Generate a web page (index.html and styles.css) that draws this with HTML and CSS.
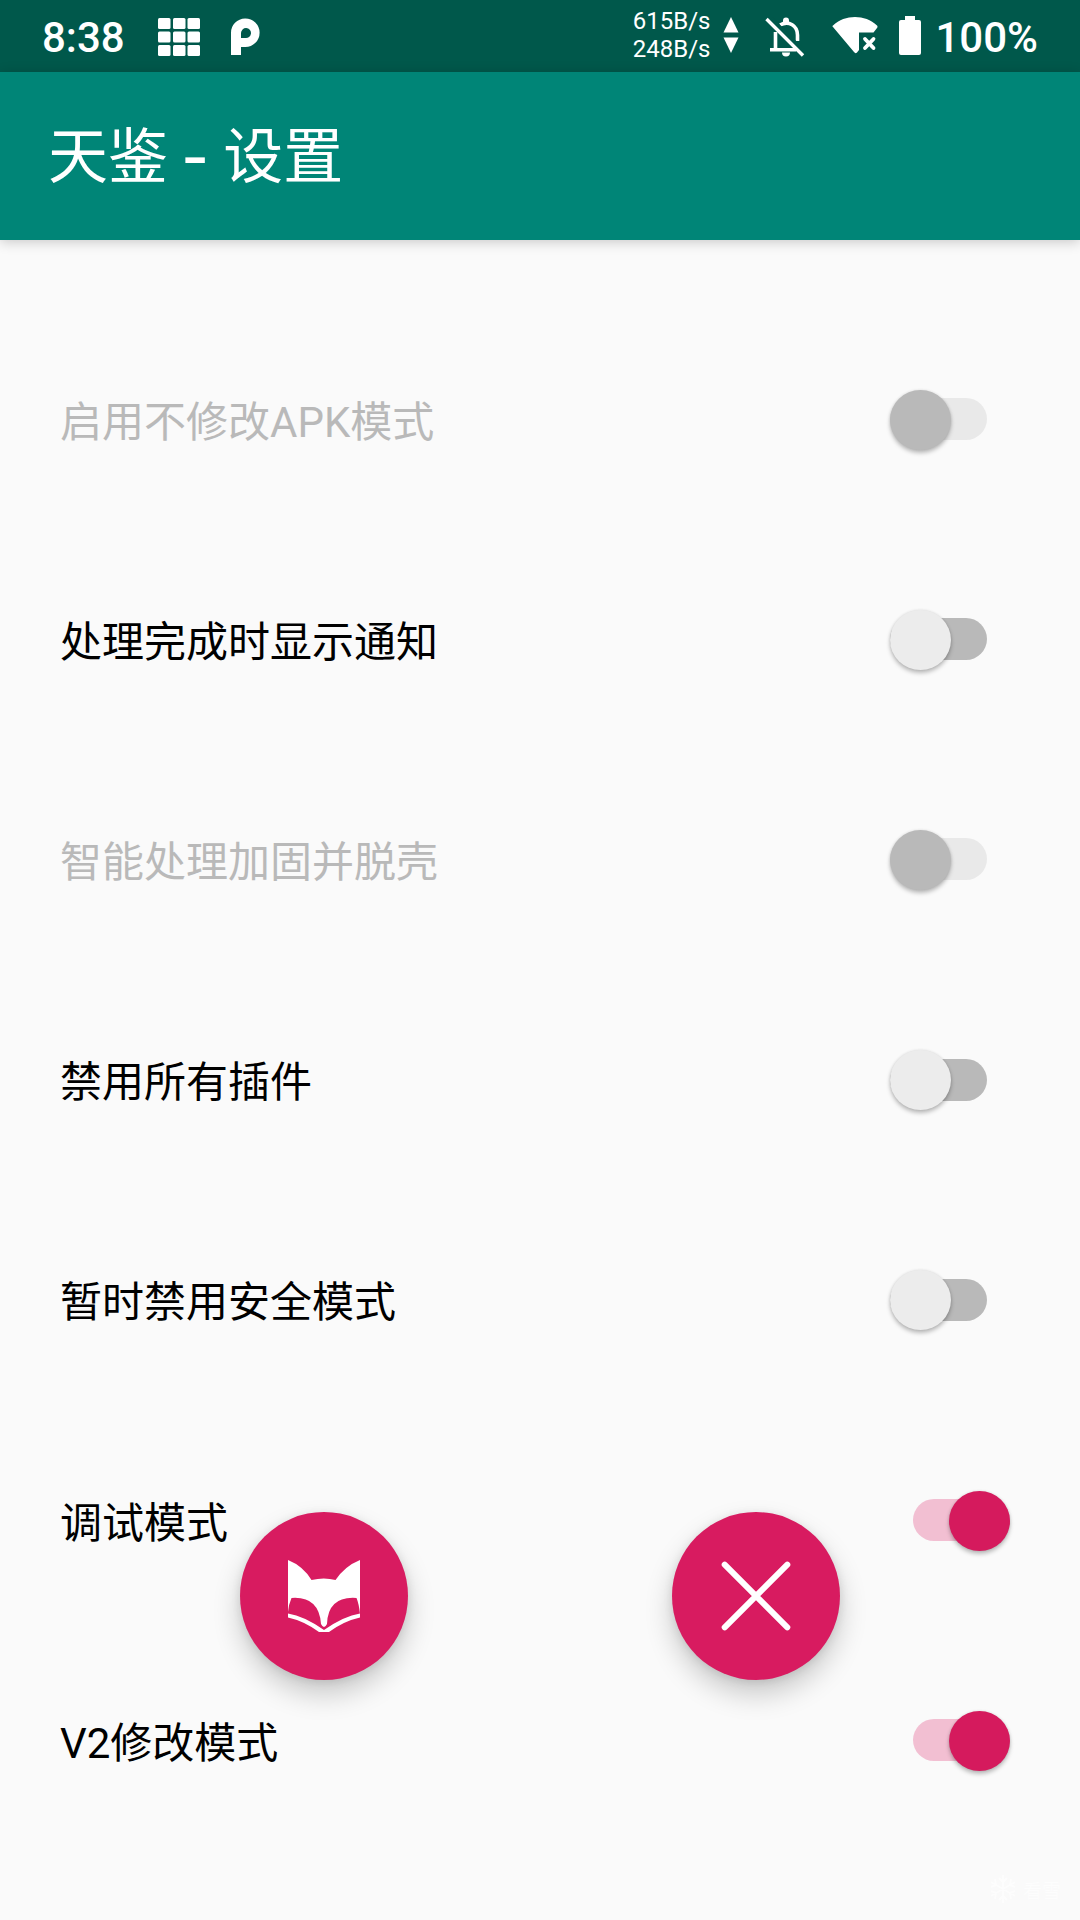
FILE: index.html
```html
<!DOCTYPE html>
<html lang="zh-CN">
<head>
    <meta charset="UTF-8">
    <meta name="viewport" content="width=device-width, initial-scale=1.0">
    <title>天鉴 - 设置</title>
    <link rel="stylesheet" href="styles.css">
</head>
<body>
    <div class="screen">
        <div class="status-bar">
            <span class="time">8:38</span>
            <svg class="icon-grid" width="44" height="40" viewBox="0 0 44 40" fill="#fff">
                <rect x="1" y="1" width="12.5" height="11" rx="1.5"/>
                <rect x="16" y="1" width="12.5" height="11" rx="1.5"/>
                <rect x="30.500" y="1" width="12.5" height="11" rx="1.5"/>
                <rect x="1" y="14.500" width="12.5" height="11" rx="1.5"/>
                <rect x="16" y="14.500" width="12.5" height="11" rx="1.5"/>
                <rect x="30.500" y="14.500" width="12.5" height="11" rx="1.5"/>
                <rect x="1" y="28" width="12.5" height="11" rx="1.5"/>
                <rect x="16" y="28" width="12.5" height="11" rx="1.5"/>
                <rect x="30.500" y="28" width="12.5" height="11" rx="1.5"/>
            </svg>
            <svg class="icon-p" width="30" height="38" viewBox="0 0 30 38">
                <path d="M1 37V15A14.300 14.300 0 1 1 15.300 29H11V37ZM11 20H15.300A5 5 0 1 0 11 15Z" fill="#fff" fill-rule="evenodd"/>
            </svg>
            <div class="speed">
                <span>615B/s</span>
                <span>248B/s</span>
            </div>
            <svg class="icon-arrows" width="16" height="36" viewBox="0 0 16 36" fill="#fff">
                <path d="M8 0L15.500 15.500H.5Z"/>
                <path d="M8 36L15.500 20.500H.5Z"/>
            </svg>
            <svg class="icon-bell" width="40" height="40" viewBox="0 0 40 40">
                <path d="M10.500 15V33M5 32.800H31M15 8C24 3 32.500 9 32.500 18V24" fill="none" stroke="#fff" stroke-width="3.600"/>
                <path d="M18 5V3.500A3 3 0 0 1 24 3.500V5ZM17 35.500H25A4 4 0 0 1 17 35.500Z" fill="#fff"/>
                <path d="M4 -.5L41 36.500" stroke="#00584b" stroke-width="4"/>
                <path d="M1.500 2L38 38.500" stroke="#fff" stroke-width="3.400"/>
            </svg>
            <svg class="icon-wifi" width="46" height="38" viewBox="0 0 46 38">
                <path d="M1 9.500C13-1.800 33-1.800 45 9.500Q46 10.500 45 12L41.500 16.500H27V34L25 36.500Q23.500 38 22 36L1 11Q0 10 1 9.500Z" fill="#fff"/>
                <path d="M33 23L41.500 32M41.500 23L33 32" stroke="#fff" stroke-width="3.800" stroke-linecap="round"/>
            </svg>
            <svg class="icon-battery" width="22" height="39" viewBox="0 0 22 39">
                <path d="M6 0H16V4H20Q22 4 22 6V37Q22 39 20 39H2Q0 39 0 37V6Q0 4 2 4H6Z" fill="#fff"/>
            </svg>
            <span class="percent">100%</span>
        </div>

        <div class="toolbar">
            <h1>天鉴 <b>-</b> 设置</h1>
        </div>

        <div class="settings">
            <div class="row disabled">
                <span>启用不修改APK模式</span>
                <div class="switch"><i></i></div>
            </div>
            <div class="row">
                <span>处理完成时显示通知</span>
                <div class="switch"><i></i></div>
            </div>
            <div class="row disabled">
                <span>智能处理加固并脱壳</span>
                <div class="switch"><i></i></div>
            </div>
            <div class="row">
                <span>禁用所有插件</span>
                <div class="switch"><i></i></div>
            </div>
            <div class="row">
                <span>暂时禁用安全模式</span>
                <div class="switch"><i></i></div>
            </div>
            <div class="row">
                <span>调试模式</span>
                <div class="switch on"><i></i></div>
            </div>
            <div class="row">
                <span>V2修改模式</span>
                <div class="switch on"><i></i></div>
            </div>
        </div>

        <!-- floating buttons over the list -->
        <div class="fabs">
            <button class="fab" aria-label="天鉴">
                <svg width="72" height="72" viewBox="0 0 72 72">
                    <path d="M0 0Q15 6 23.500 20Q36 17 47.500 20Q57 6 72 0V54Q71 44 68.500 38Q40 36 39 64Q36 70 33 64Q31 36 3.500 38Q.8 44 0 52Z" fill="#fff"/>
                    <path d="M0 53.500Q16 56 36 70Q56 56 72 53.500V57.500Q56 61 41 72H31Q16 61 0 57.500Z" fill="#fff"/>
                </svg>
            </button>
            <button class="fab" aria-label="关闭">
                <svg width="72" height="72" viewBox="0 0 72 72">
                    <path d="M4.700 4.700L67.300 67.300M67.300 4.700L4.700 67.300" stroke="#fff" stroke-width="6" stroke-linecap="round"/>
                </svg>
            </button>
        </div>

        <div class="watermark">
            <svg width="28" height="30" viewBox="-14 -15 28 30" fill="none" stroke="#fff" stroke-width="2">
                <path d="M0-14V14M-12-7L12 7M-12 7L12-7M-4-11L0-7L4-11M-4 11L0 7L4 11M-12-2L-7-4L-8-10M12-2L7-4L8-10M-12 2L-7 4L-8 10M12 2L7 4L8 10"/>
            </svg>
            <span>看雪</span>
        </div>
    </div>
</body>
</html>
```
FILE: styles.css
```css
body {
    margin: 0;
    background: #fafafa;
    font-family: Roboto, "Noto Sans CJK SC", sans-serif;
}
.screen {
    position: relative;
    width: 1080px;
    height: 1920px;
    overflow: hidden;
}
.status-bar {
    display: flex;
    align-items: center;
    box-sizing: border-box;
    height: 72px;
    padding: 2px 42px 0 42px;
    background: #00584b;
    color: #fff;
}
.status-bar svg {
    flex: none;
}
.time, .percent {
    padding-top: 1px;
    font-size: 42px;
    font-weight: 500;
    line-height: 72px;
}
.icon-grid {
    margin-left: 32px;
}
.icon-p {
    margin-left: 29px;
}
.speed {
    display: flex;
    flex-direction: column;
    margin-left: auto;
    padding-bottom: 4px;
    font-size: 24px;
    line-height: 28px;
}
.icon-arrows {
    margin: 0 0 4px 13px;
}
.icon-bell {
    margin-left: 26px;
}
.icon-wifi {
    margin: 0 0 4px 27px;
}
.icon-battery {
    margin: 0 0 3px 21px;
}
.percent {
    margin-left: 14px;
}
.toolbar {
    display: flex;
    align-items: center;
    box-sizing: border-box;
    height: 168px;
    padding: 3px 0 0 48px;
    background: #008577;
    box-shadow: 0 2px 12px rgba(0, 0, 0, 0.2);
}
.toolbar h1 {
    margin: 0;
    color: #fff;
    font-size: 60px;
    font-weight: 400;
    line-height: 88px;
}
.toolbar b {
    display: inline-block;
    margin: 0 3px 0 2px;
    font-weight: 500;
    transform: scaleX(1.25);
}
.settings {
    padding-top: 69px;
}
.row {
    display: flex;
    align-items: center;
    justify-content: space-between;
    height: 220.200px;
    padding: 0 93px 0 60px;
    color: #000;
    font-size: 42px;
}
.row span {
    padding-bottom: 2px;
}
.row.disabled {
    color: #b9b9b9;
}
.switch {
    display: flex;
    align-items: center;
    width: 97px;
    height: 42px;
    border-radius: 21px;
    background: #b9b9b9;
}
.switch i {
    width: 61px;
    height: 60px;
    margin-top: 1px;
    border-radius: 50%;
    background: #ececec;
    box-shadow: 0 3px 4px rgba(0, 0, 0, 0.25), 0 0 3px rgba(0, 0, 0, 0.1);
}
.disabled .switch {
    background: #e9e9e9;
}
.disabled .switch i {
    background: #b9b9b9;
}
.switch.on {
    justify-content: flex-end;
    margin-right: -23px;
    background: #f2bfd2;
}
.switch.on i {
    background: #d51a5d;
}
.fabs {
    position: absolute;
    left: 240px;
    top: 1512px;
    display: flex;
    gap: 264px;
}
.fab {
    display: flex;
    align-items: center;
    justify-content: center;
    width: 168px;
    height: 168px;
    padding: 0;
    border: none;
    border-radius: 50%;
    background: #d81b60;
    box-shadow: 0 14px 28px rgba(0, 0, 0, 0.2), 0 2px 10px rgba(0, 0, 0, 0.1);
}
.watermark {
    position: absolute;
    right: 19px;
    bottom: 16px;
    display: flex;
    align-items: center;
    gap: 6px;
    color: #fff;
    font-size: 19px;
    font-weight: 400;
    opacity: 0.6;
}
```
